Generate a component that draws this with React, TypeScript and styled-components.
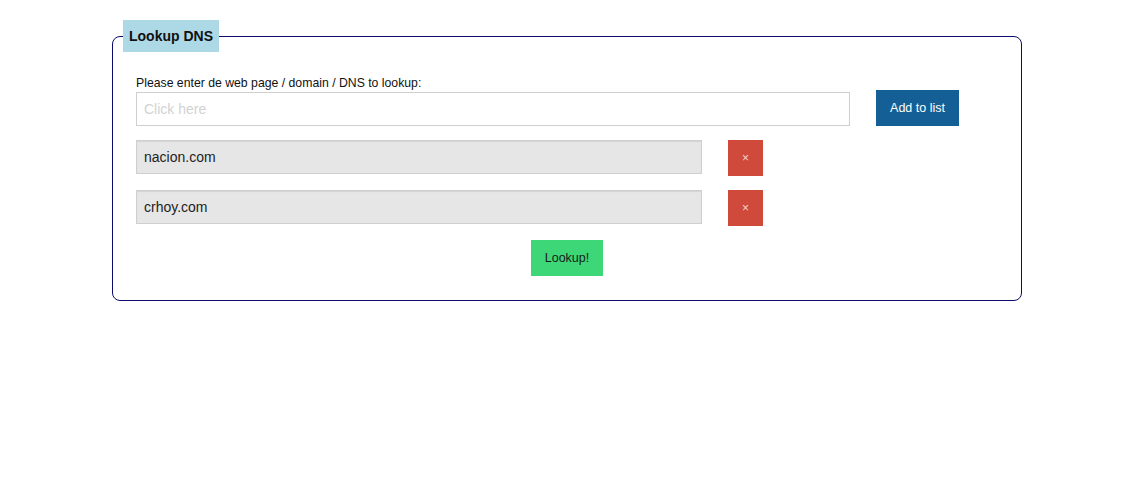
import React, { useState } from "react";
import styled, { createGlobalStyle } from "styled-components";

const Global = createGlobalStyle`
  html, body { margin: 0; padding: 0; background: #ffffff; }
  body { font-family: "Liberation Sans", Arial, sans-serif; }
  * { box-sizing: border-box; }
`;

const Frame = styled.fieldset`
  margin: 20px 0 0 112px;
  width: 910px;
  padding: 0 11px 24px;
  border: 1px solid #0b0b6e;
  border-radius: 8px;
  min-width: 0;
`;

const Legend = styled.legend`
  background: #add8e6;
  margin-left: -1px;
  padding: 0 6px;
  line-height: 32px;
  font-size: 14px;
  font-weight: bold;
  color: #111;
`;

const Content = styled.div`
  display: flex;
  flex-direction: column;
  padding: 24px 12px 0;
`;

const Label = styled.label`
  display: block;
  font-size: 12.25px;
  line-height: 14px;
  color: #111;
`;

const Row = styled.div<{ $align?: string; $gap?: number }>`
  display: flex;
  align-items: ${(p) => p.$align || "flex-start"};
  gap: 26px;
  margin-top: ${(p) => p.$gap ?? 14}px;
`;

const TextInput = styled.input<{ $width: number; $readonly?: boolean }>`
  width: ${(p) => p.$width}px;
  height: 34px;
  padding: 0 7px;
  font-family: "Liberation Sans", Arial, sans-serif;
  font-size: 14px;
  color: #222;
  background: ${(p) => (p.$readonly ? "#e6e6e6" : "#ffffff")};
  border: 1px solid #cfcfcf;
  box-shadow: ${(p) => (p.$readonly ? "inset 0 1px 1px rgba(0,0,0,0.08)" : "none")};
  outline: none;
  border-radius: 0;
  &::placeholder { color: #d2d2d2; }
`;

const Button = styled.button<{ $bg: string; $fg: string; $w: number }>`
  width: ${(p) => p.$w}px;
  height: 36px;
  padding: 0;
  border: none;
  border-radius: 0;
  background: ${(p) => p.$bg};
  color: ${(p) => p.$fg};
  font-family: "Liberation Sans", Arial, sans-serif;
  font-size: 12.5px;
  cursor: pointer;
`;

const DeleteButton = styled(Button)`
  font-size: 12px;
  color: #f3d6d0;
`;

const Center = styled.div`
  display: flex;
  justify-content: center;
  margin-top: 14px;
`;

export default function App() {
  const [items] = useState(["nacion.com", "crhoy.com"]);
  return (
    <>
      <Global />
      <Frame>
        <Legend>Lookup DNS</Legend>
        <Content>
          <Label>Please enter de web page / domain / DNS to lookup:</Label>
          <Row $align="flex-end" $gap={0}>
            <TextInput $width={714} placeholder="Click here" />
            <Button $bg="#145f95" $fg="#ffffff" $w={83}>Add to list</Button>
          </Row>
          {items.map((it) => (
            <Row key={it}>
              <TextInput $width={566} $readonly readOnly value={it} />
              <DeleteButton $bg="#cf4a3a" $fg="#ffffff" $w={35}>×</DeleteButton>
            </Row>
          ))}
          <Center>
            <Button $bg="#3dd777" $fg="#1a1a1a" $w={72}>Lookup!</Button>
          </Center>
        </Content>
      </Frame>
    </>
  );
}
